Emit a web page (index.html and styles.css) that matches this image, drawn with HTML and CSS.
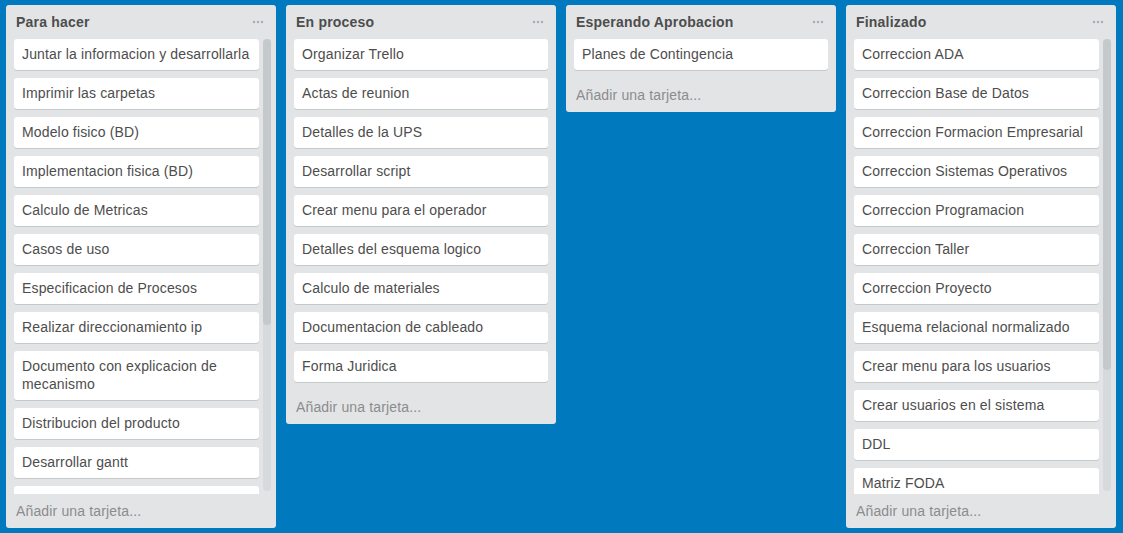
FILE: index.html
```html
<!DOCTYPE html>
<html lang="es">
<head>
<meta charset="utf-8">
<title>Tablero</title>
<link rel="stylesheet" href="styles.css">
</head>
<body>
<div class="board">
  <section class="list">
    <header class="list-header">
      <h2 class="list-title">Para hacer</h2>
      <span class="list-menu"><svg width="12" height="4" viewBox="0 0 12 4"><circle cx="2" cy="2" r="1.2"/><circle cx="6" cy="2" r="1.2"/><circle cx="10" cy="2" r="1.2"/></svg></span>
    </header>
    <div class="list-body scrolling">
      <div class="cards">
        <div class="card">Juntar la informacion y desarrollarla</div>
        <div class="card">Imprimir las carpetas</div>
        <div class="card">Modelo fisico (BD)</div>
        <div class="card">Implementacion fisica (BD)</div>
        <div class="card">Calculo de Metricas</div>
        <div class="card">Casos de uso</div>
        <div class="card">Especificacion de Procesos</div>
        <div class="card">Realizar direccionamiento ip</div>
        <div class="card">Documento con explicacion de mecanismo</div>
        <div class="card">Distribucion del producto</div>
        <div class="card">Desarrollar gantt</div>
        <div class="card card-empty"></div>
      </div>
      <div class="scrollbar"><div class="thumb" style="height:286px"></div></div>
    </div>
    <div class="add-card">Añadir una tarjeta...</div>
  </section>

  <section class="list">
    <header class="list-header">
      <h2 class="list-title">En proceso</h2>
      <span class="list-menu"><svg width="12" height="4" viewBox="0 0 12 4"><circle cx="2" cy="2" r="1.2"/><circle cx="6" cy="2" r="1.2"/><circle cx="10" cy="2" r="1.2"/></svg></span>
    </header>
    <div class="list-body">
      <div class="cards">
        <div class="card">Organizar Trello</div>
        <div class="card">Actas de reunion</div>
        <div class="card">Detalles de la UPS</div>
        <div class="card">Desarrollar script</div>
        <div class="card">Crear menu para el operador</div>
        <div class="card">Detalles del esquema logico</div>
        <div class="card">Calculo de materiales</div>
        <div class="card">Documentacion de cableado</div>
        <div class="card">Forma Juridica</div>
      </div>
    </div>
    <div class="add-card">Añadir una tarjeta...</div>
  </section>

  <section class="list">
    <header class="list-header">
      <h2 class="list-title">Esperando Aprobacion</h2>
      <span class="list-menu"><svg width="12" height="4" viewBox="0 0 12 4"><circle cx="2" cy="2" r="1.2"/><circle cx="6" cy="2" r="1.2"/><circle cx="10" cy="2" r="1.2"/></svg></span>
    </header>
    <div class="list-body">
      <div class="cards">
        <div class="card">Planes de Contingencia</div>
      </div>
    </div>
    <div class="add-card">Añadir una tarjeta...</div>
  </section>

  <section class="list">
    <header class="list-header">
      <h2 class="list-title">Finalizado</h2>
      <span class="list-menu"><svg width="12" height="4" viewBox="0 0 12 4"><circle cx="2" cy="2" r="1.2"/><circle cx="6" cy="2" r="1.2"/><circle cx="10" cy="2" r="1.2"/></svg></span>
    </header>
    <div class="list-body scrolling">
      <div class="cards">
        <div class="card">Correccion ADA</div>
        <div class="card">Correccion Base de Datos</div>
        <div class="card">Correccion Formacion Empresarial</div>
        <div class="card">Correccion Sistemas Operativos</div>
        <div class="card">Correccion Programacion</div>
        <div class="card">Correccion Taller</div>
        <div class="card">Correccion Proyecto</div>
        <div class="card">Esquema relacional normalizado</div>
        <div class="card">Crear menu para los usuarios</div>
        <div class="card">Crear usuarios en el sistema</div>
        <div class="card">DDL</div>
        <div class="card">Matriz FODA</div>
      </div>
      <div class="scrollbar"><div class="thumb" style="height:331px"></div></div>
    </div>
    <div class="add-card">Añadir una tarjeta...</div>
  </section>
</div>
</body>
</html>
```

FILE: styles.css
```css
* { box-sizing: border-box; }

html, body {
  margin: 0;
  height: 100%;
}

body {
  background: #0079bf;
  font-family: "Liberation Sans", Arial, sans-serif;
  color: #4d4d4d;
  overflow: hidden;
}

.board {
  display: flex;
  align-items: flex-start;
  gap: 10px;
  padding: 5px 6px;
}

.list {
  width: 270px;
  flex: none;
  background: #e2e4e6;
  border-radius: 3px;
  display: flex;
  flex-direction: column;
}

.list-header {
  display: flex;
  align-items: center;
  justify-content: space-between;
  padding: 8px 8px 8px 10px;
}

.list-title {
  margin: 0;
  font-size: 14px;
  line-height: 18px;
  font-weight: bold;
  letter-spacing: 0.2px;
  color: #4d4d4d;
}

.list-menu {
  width: 20px;
  height: 18px;
  display: flex;
  align-items: center;
  justify-content: center;
  fill: #a5acb0;
}

.list-body {
  display: flex;
  padding: 0 8px;
}

.list-body.scrolling {
  padding: 0 5px 0 8px;
  gap: 4px;
}

.cards {
  flex: 1;
  min-width: 0;
}

.scrolling .cards {
  height: 455px;
  overflow: hidden;
}

.card {
  background: #fff;
  border-radius: 3px;
  box-shadow: 0 1px 0 #c4c9cc;
  padding: 6px 8px 7px;
  margin-bottom: 8px;
  font-size: 14px;
  line-height: 18px;
  letter-spacing: 0.15px;
  color: #4d4d4d;
}

.card-empty {
  min-height: 31px;
}

.scrollbar {
  width: 8px;
  height: 452px;
  flex: none;
  background: #d6dadc;
  border-radius: 4px;
}

.thumb {
  width: 100%;
  background: #c4c9cc;
  border-radius: 4px;
}

.add-card {
  padding: 8px 10px;
  font-size: 14px;
  line-height: 18px;
  letter-spacing: 0.15px;
  color: #8c8c8c;
}
```
